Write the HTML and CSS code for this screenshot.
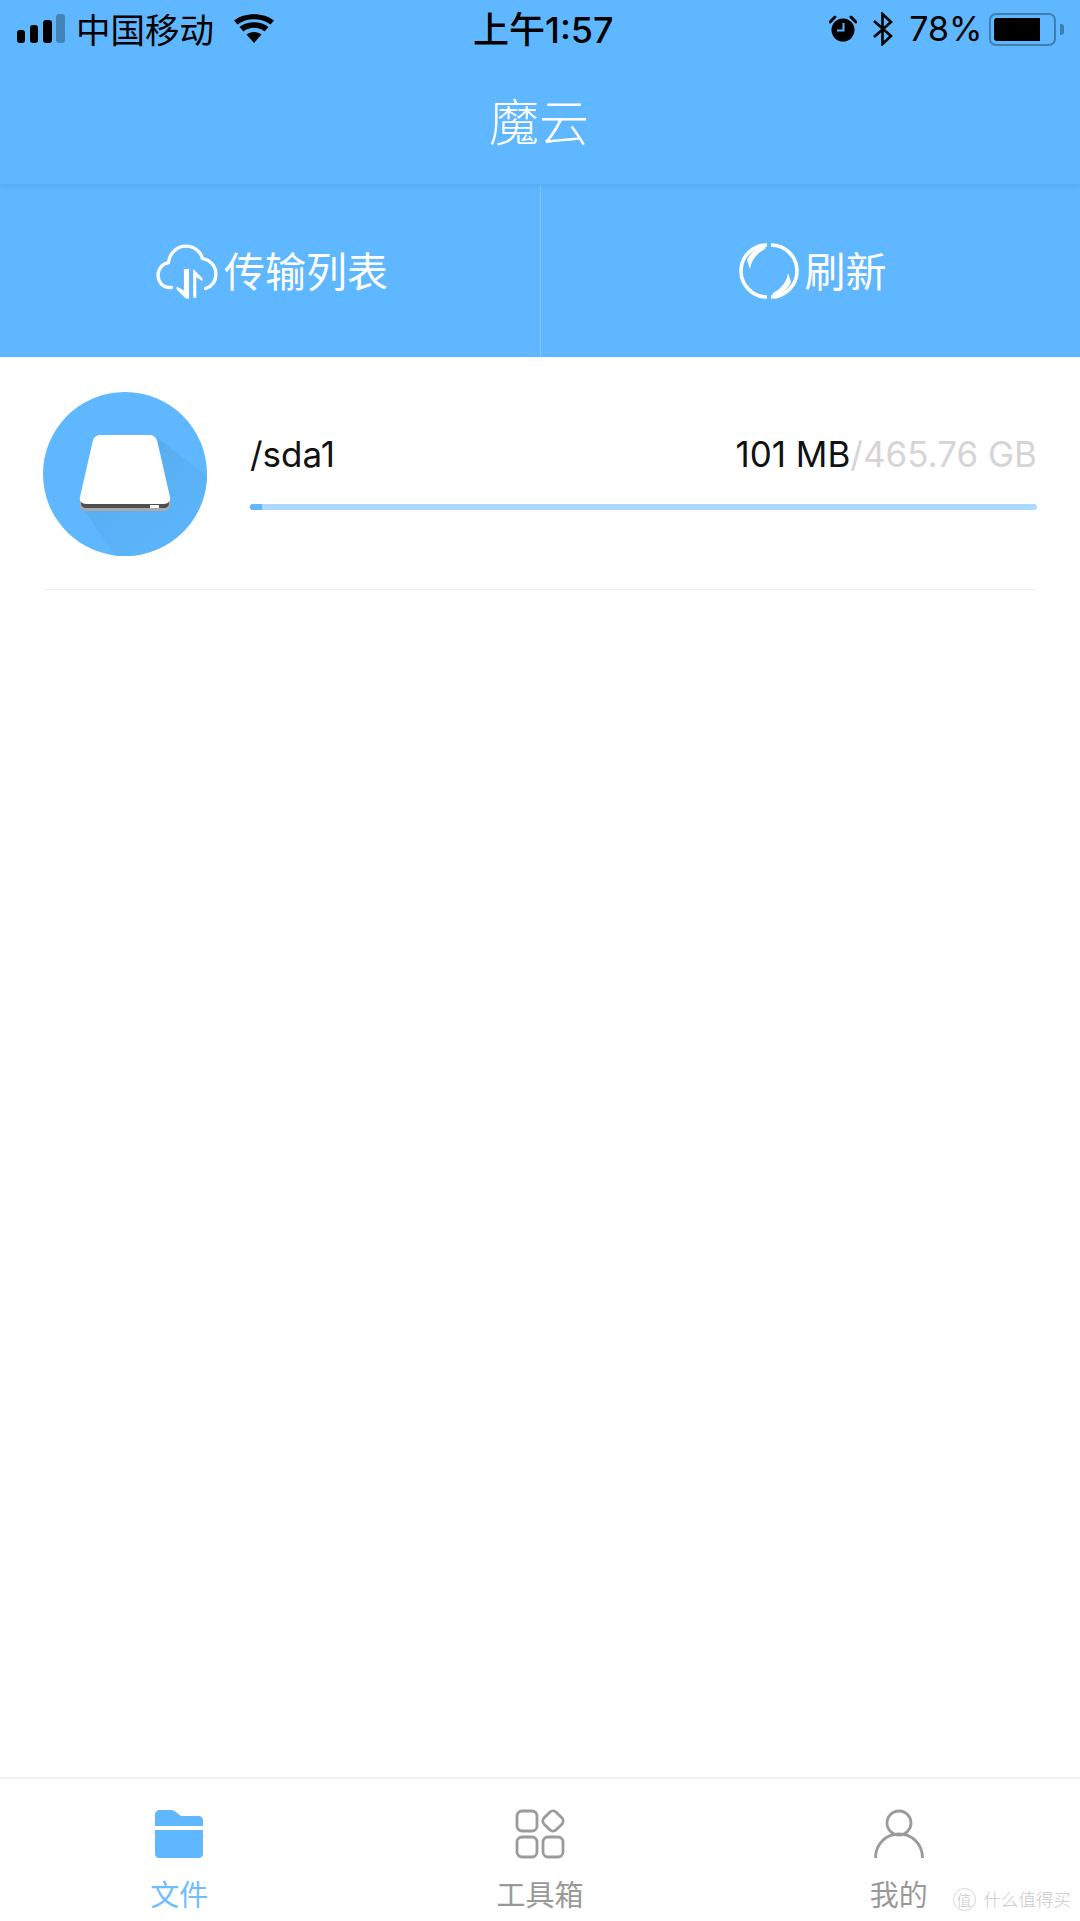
FILE: index.html
```html
<!DOCTYPE html>
<html lang="zh">
<head>
<meta charset="utf-8">
<title>魔云</title>
<link rel="stylesheet" href="styles.css">
</head>
<body>
<div class="app">
  <header class="top">
    <div class="status">
      <div class="status-side">
        <svg class="signal" viewBox="0 0 48 29"><rect x="0" y="16" width="8" height="13" rx="3"/><rect x="13" y="11" width="8" height="18" rx="3"/><rect x="26" y="6" width="9" height="23" rx="3"/><rect x="39" y="0" width="9" height="29" rx="3" opacity=".28"/></svg>
        <span class="carrier">中国移动</span>
        <svg class="wifi" viewBox="0 0 40 29"><path d="M20 29 12.500 20.500C16.500 17 23.500 17 27.500 20.500Z"/><path d="M9.500 17.500 5.500 13C12.500 6.500 27.500 6.500 34.500 13L30.500 17.500C25 12.500 15 12.500 9.500 17.500Z"/><path d="M3.500 10.500 0 6.500C10-2 30-2 40 6.500L36.500 10.500C27.500 3.500 12.500 3.500 3.500 10.500Z"/></svg>
      </div>
      <div class="clock">上午1:57</div>
      <div class="status-side status-right">
        <svg class="alarm" viewBox="0 0 28 28"><circle cx="14" cy="15" r="11.500"/><path d="M1 7 6 2 M22 2 27 7" stroke="#000" stroke-width="3" stroke-linecap="round"/><path d="M14.500 8V15.500H8" fill="none" stroke="#5eb7ff" stroke-width="2"/></svg>
        <svg class="bt" viewBox="0 0 22 34"><path d="M2 9 19 24 10.500 32V2L19 10 2 25" fill="none" stroke="#000" stroke-width="2.600"/></svg>
        <span class="pct">78%</span>
        <div class="battery"><div class="battery-fill"></div></div>
        <div class="battery-tip"></div>
      </div>
    </div>
    <h1 class="title">魔云</h1>
  </header>
  <nav class="actions">
    <div class="action action-first">
      <svg class="act-icon cloud" viewBox="0 0 60 54"><path d="M15 42H13C6 42 2 36 2 30 2 24 6 19 12 18 13 9 20 2 29 2 37 2 43 7 45 14 52 15 58 21 58 29 58 36 54 41 48 43" fill="none" stroke="#fff" stroke-width="3.200" stroke-linecap="round"/><path d="M32 24V53H29L20 44V41L27 45V24Z" fill="#fff"/><path d="M36 24 45 33V36L39 32V52H36Z" fill="#fff"/></svg>
      <span>传输列表</span>
    </div>
    <div class="action action-second">
      <svg class="act-icon sync" viewBox="0 0 60 60">
        <path d="M28 4A26 26 0 0 0 28 56M32 4A26 26 0 0 1 32 56" fill="none" stroke="#fff" stroke-width="3.600"/>
        <path d="M27 4C18 6 11 12 8 19L11 28C12 20 17 13 26 8Z" fill="#fff"/>
        <path d="M33 56C42 54 49 48 52 41L49 32C48 40 43 47 34 52Z" fill="#fff"/>
      </svg>
      <span>刷新</span>
    </div>
  </nav>
  <main class="list">
    <div class="row">
      <svg class="disk" viewBox="0 0 164 164">
        <defs><linearGradient id="shade" x1="0.200" y1="0.100" x2="0.800" y2="0.900"><stop offset="0" stop-color="#57abec"/><stop offset="1" stop-color="#5cb5fc"/></linearGradient></defs>
        <circle cx="82" cy="82" r="82" fill="#5eb7ff"/>
        <path d="M112 44 164 84A82 82 0 0 1 72 163.400L38 114Z" fill="url(#shade)"/>
        <path d="M37 105H127V112C127 116 125 119 121 119H43C39 119 37 116 37 112Z" fill="#aaa"/>
        <path d="M38 105H126V111C126 114 124 116 121 116H43C40 116 38 114 38 111Z" fill="#4f4f4f"/>
        <path d="M57 43H107C110 43 113 45 114 48L127 105C128 109 125 112 121 112H43C39 112 36 109 37 105L50 48C51 45 54 43 57 43Z" fill="#fff"/>
        <rect x="107" y="113" width="9" height="3" fill="#fff"/>
      </svg>
      <div class="info">
        <div class="info-top">
          <span class="name">/sda1</span>
          <span class="usage">101 MB<span class="total">/465.76 GB</span></span>
        </div>
        <div class="bar"><div class="bar-fill" style="width:1.500%"></div></div>
      </div>
    </div>
  </main>
  <footer class="tabs">
    <div class="tab tab-active">
      <svg class="tab-icon" viewBox="0 0 50 50"><path d="M1 19V6C1 3 3 1 6 1H17C19 1 21 2 23 4L27 7H45C47 7 49 9 49 11V17H1Z" fill="#5eb7ff"/><path d="M1 21H49V45C49 47 47 49 45 49H5C3 49 1 47 1 45Z" fill="#5eb7ff"/></svg>
      <span>文件</span>
    </div>
    <div class="tab">
      <svg class="tab-icon" viewBox="0 0 50 50" fill="none" stroke="#9b9b9b" stroke-width="2.800"><rect x="2" y="2" width="20" height="20" rx="5"/><rect x="2" y="28" width="20" height="20" rx="5"/><rect x="28" y="28" width="20" height="20" rx="5"/><rect x="29.500" y="3.500" width="17" height="17" rx="4.500" transform="rotate(45 38 12)"/></svg>
      <span>工具箱</span>
    </div>
    <div class="tab">
      <svg class="tab-icon" viewBox="0 0 50 50" fill="none" stroke="#9b9b9b" stroke-width="2.800"><circle cx="25" cy="14" r="12"/><path d="M1.500 49C1.500 35 12 25 25 25S48.500 35 48.500 49"/></svg>
      <span>我的</span>
    </div>
  </footer>
  <div class="watermark"><span class="wm-logo">值</span><span>什么值得买</span></div>
</div>
</body>
</html>
```

FILE: styles.css
```css
* { box-sizing: border-box; }
html, body { margin: 0; padding: 0; background: #fff; }
body { font-family: Inter, "Noto Sans CJK SC", sans-serif; }
.app { position: relative; width: 1080px; height: 1921px; display: flex; flex-direction: column; overflow: hidden; }

.top { background: #5eb7ff; height: 185px; border-bottom: 1px solid #58aff4; box-shadow: 0 1px 4px rgba(60,130,190,.25); position: relative; z-index: 1; }
.status { height: 58px; display: flex; align-items: center; justify-content: space-between; padding: 0 16px 0 17px; color: #000; position: relative; }
.status-side { display: flex; align-items: center; }
.signal { width: 48px; height: 29px; margin-top: -1px; }
.carrier { font: 400 34.500px/1 "Noto Sans CJK SC", sans-serif; margin: -2px 0 0 11px; }
.wifi { width: 40px; height: 29px; margin-left: 20px; margin-top: -1px; }
.clock { position: absolute; left: 473px; top: 12px; font: 500 36px/36px Inter, "Noto Sans CJK SC", sans-serif; }
.status-right { margin-left: auto; }
.alarm { width: 28px; height: 28px; margin-left: -1px; }
.bt { width: 22px; height: 34px; margin-left: 15px; }
.pct { font: 400 34px/1 Inter, sans-serif; margin-left: 15px; }
.battery { width: 67px; height: 33px; margin-left: 6.500px; border: 2px solid #3f7fb0; border-radius: 7px; padding: 3px; }
.battery-fill { width: 46px; height: 100%; background: #000; border-radius: 3px 0 0 3px; }
.battery-tip { width: 4px; height: 11px; margin-left: 4px; background: #3f7fb0; border-radius: 0 3px 3px 0; }
.title { margin: 0; height: 126px; padding-right: 2px; font: 300 50px/122px "Noto Sans CJK SC", sans-serif; color: #fff; text-align: center; }

.actions { height: 172px; background: #5eb7ff; display: flex; color: #fff; font: 400 41px/1 "Noto Sans CJK SC", sans-serif; }
.action { flex: 1; display: flex; align-items: center; justify-content: center; gap: 6px; }
.action > span { margin-top: -4px; }
.action-first { flex: 0 0 541px; border-right: 1px solid #85c9ff; padding-left: 4px; }
.action-second { padding-left: 4px; }
.act-icon { display: block; }
.cloud { width: 62px; height: 56px; margin-top: 2px; }
.sync { width: 60px; height: 60px; }

.list { flex: 1; padding: 0 43px; }
.row { height: 233px; display: flex; align-items: flex-start; gap: 43px; padding-top: 35px; border-bottom: 1px solid #f1f1f1; }
.disk { width: 164px; height: 164px; flex: none; }
.info { flex: 1; padding-top: 40px; }
.info-top { display: flex; justify-content: space-between; align-items: center; height: 44px; font-size: 35px; color: #111; }
.total { color: #d5d5d5; }
.bar { height: 6px; margin-top: 28px; background: #abd9ff; border-radius: 3px; overflow: hidden; }
.bar-fill { height: 100%; background: #5eb7ff; }

.tabs { height: 144px; display: flex; border-top: 2px solid #f1f1f1; padding: 30px 2px 0 0; }
.tab { flex: 1; display: flex; flex-direction: column; align-items: center; font: 400 29px/1 "Noto Sans CJK SC", sans-serif; color: #999; gap: 20px; }
.tab-active { color: #6ebeff; padding-right: 2px; }
.tab-icon { width: 50px; height: 50px; display: block; }

.watermark { position: absolute; right: 9px; bottom: 10px; display: flex; align-items: center; gap: 8px; font: 300 17.500px/24px "Noto Sans CJK SC", sans-serif; color: #c9c9c9; }
.wm-logo { width: 23px; height: 23px; border: 1px solid #d5d5d5; border-radius: 50%; font-size: 15px; line-height: 21px; text-align: center; }
```
